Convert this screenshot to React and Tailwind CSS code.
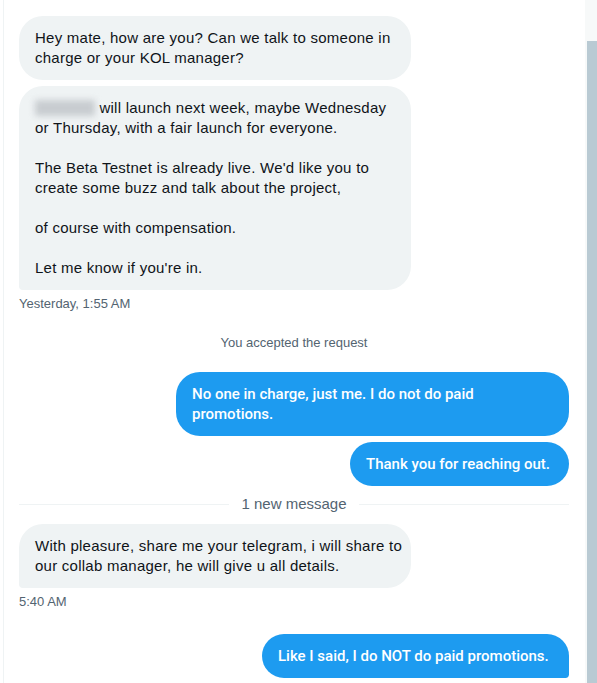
import React from 'react';

const font = { fontFamily: '"Liberation Sans", Arial, sans-serif' };

const Received = ({ lines, last }) => (
  <div
    className={`w-[392px] bg-[#eff3f4] text-[#0f1419] text-[15px] leading-5 tracking-[0.25px] whitespace-nowrap px-4 py-3 rounded-3xl ${
      last ? 'rounded-bl-[4px]' : ''
    }`}
  >
    {lines}
  </div>
);

const Sent = ({ children, width, last }) => (
  <div className="flex justify-end">
    <div
      className={`${width} bg-[#1d9bf0] text-white text-[15px] leading-5 font-medium whitespace-nowrap px-4 py-3 rounded-3xl ${
        last ? 'rounded-br-[4px]' : ''
      }`}
      style={{ fontFamily: 'Roboto, "Liberation Sans", Arial, sans-serif' }}
    >
      {children}
    </div>
  </div>
);

export default function App() {
  return (
    <div className="w-[597px] h-[683px] overflow-hidden bg-white flex" style={font}>
      {/* conversation */}
      <div className="flex-1 ml-[3px] border-l border-[#eff3f4] pl-[15px] pr-4 pt-4 flex flex-col">
        <Received
          lines={
            <>
              Hey mate, how are you? Can we talk to someone in
              <br />
              charge or your KOL manager?
            </>
          }
        />
        <div className="mt-[6px]">
          <Received
            last
            lines={
              <>
                <span className="inline-block w-[60px] h-[16px] bg-[#c8ccd0] blur-[3px] align-middle -mt-[2px]" />{' '}
                will launch next week, maybe Wednesday
                <br />
                or Thursday, with a fair launch for everyone.
                <br />
                <br />
                The Beta Testnet is already live. We'd like you to
                <br />
                create some buzz and talk about the project,
                <br />
                <br />
                of course with compensation.
                <br />
                <br />
                Let me know if you're in.
              </>
            }
          />
        </div>
        <div className="mt-[6px] text-[13px] leading-4 text-[#536471]">Yesterday, 1:55 AM</div>

        <div className="mt-[23px] text-[13px] leading-4 text-[#536471] text-center">
          You accepted the request
        </div>

        <div className="mt-[21px]">
          <Sent width="w-[393px]">
            No one in charge, just me. I do not do paid
            <br />
            promotions.
          </Sent>
        </div>
        <div className="mt-[6px]">
          <Sent width="w-[219px]">Thank you for reaching out.</Sent>
        </div>

        <div className="mt-2 flex items-center gap-3">
          <div className="flex-1 h-px bg-[#eff3f4]" />
          <span className="text-[15px] leading-5 text-[#536471]">1 new message</span>
          <div className="flex-1 h-px bg-[#eff3f4]" />
        </div>

        <div className="mt-[10px]">
          <Received
            last
            lines={
              <>
                With pleasure, share me your telegram, i will share to
                <br />
                our collab manager, he will give u all details.
              </>
            }
          />
        </div>
        <div className="mt-[6px] text-[13px] leading-4 text-[#536471]">5:40 AM</div>

        <div className="mt-6">
          <Sent width="w-[307px]" last>
            Like I said, I do NOT do paid promotions.
          </Sent>
        </div>
      </div>

      {/* scrollbar */}
      <div className="w-[12px] bg-[#f7f9f9] flex flex-col pl-[2px]">
        <div className="h-[41px]" />
        <div className="flex-1 bg-[#b9cad3]" />
      </div>
    </div>
  );
}
